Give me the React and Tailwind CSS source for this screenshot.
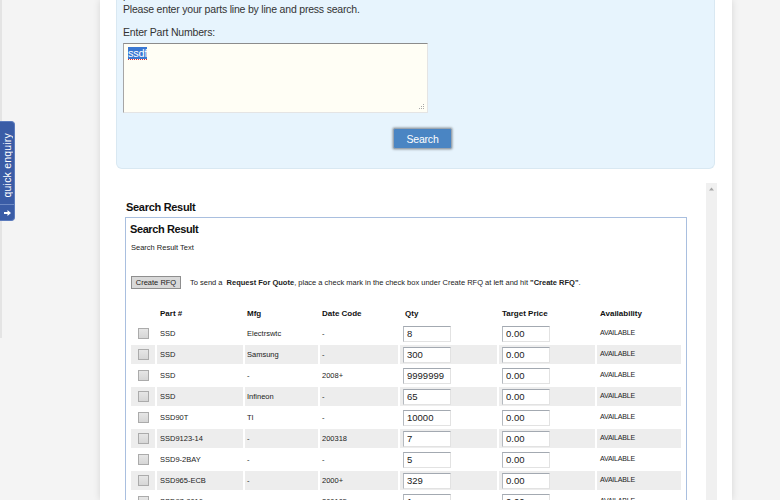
import React from "react";

const rows = [
  { part: "SSD", mfg: "Electrswtc", date: "-", qty: "8" },
  { part: "SSD", mfg: "Samsung", date: "-", qty: "300" },
  { part: "SSD", mfg: "-", date: "2008+", qty: "9999999" },
  { part: "SSD", mfg: "Infineon", date: "-", qty: "65" },
  { part: "SSD90T", mfg: "TI", date: "-", qty: "10000" },
  { part: "SSD9123-14", mfg: "-", date: "200318", qty: "7" },
  { part: "SSD9-2BAY", mfg: "-", date: "-", qty: "5" },
  { part: "SSD965-ECB", mfg: "-", date: "2000+", qty: "329" },
  { part: "SSD97-8016", mfg: "-", date: "200105", qty: "1" },
];

function Field({ value }) {
  return (
    <input
      readOnly
      value={value}
      className="block h-[16px] w-[48px] border border-t-[#a3a9b1] border-l-[#b5bac0] border-r-[#e2e2e2] border-b-[#e2e2e2] bg-white px-[3px] text-[9.5px] text-[#222] outline-none"
    />
  );
}

function QuickEnquiry() {
  return (
    <div className="absolute left-0 top-[121px] flex h-[100px] w-[15px] flex-col items-center rounded-r-[4px] border border-l-0 border-[#5b7bbd] bg-[#3a5ca6]">
      <div className="mt-[5px] flex h-[77px] items-center justify-center">
        <span className="rotate-180 text-[10.5px] leading-[13px] tracking-[0.2px] text-white [writing-mode:vertical-rl]">
          quick enquiry
        </span>
      </div>
      <div className="h-px w-full bg-[#6d89c4]" />
      <svg className="mt-[5px]" width="7" height="6" viewBox="0 0 7 6">
        <path d="M0 2 H3.5 V0 L7 3 L3.5 6 V4 H0 Z" fill="#fff" />
      </svg>
    </div>
  );
}

export default function App() {
  return (
    <div
      className="relative flex h-[500px] w-[780px] overflow-hidden bg-[#f4f4f4] text-[#222]"
      style={{ fontFamily: '"Liberation Sans", Arial, sans-serif' }}
    >
      <div className="absolute left-0 top-0 h-[338px] w-[2px] bg-[#e4e4e4]" />

      <div className="w-[100px] shrink-0" />

      <div className="flex w-[632px] shrink-0 flex-col bg-white shadow-[0_0_7px_rgba(0,0,0,0.13)]">
        {/* Search form */}
        <div className="-mt-[12px] ml-[16px] w-[599px] rounded-b-[6px] border border-t-0 border-[#d9e8f2] bg-[#e7f4fd] pb-[19px] pl-[6px] text-[10.5px] leading-[14px] tracking-[-0.2px] text-[#333]">
          <p>parts search</p>
          <p>Please enter your parts line by line and press search.</p>
          <p className="mt-[9px]">Enter Part Numbers:</p>
          <div className="relative mt-[4px] h-[70px] w-[305px] border border-t-[#8c8c8c] border-l-[#a6a6a6] border-r-[#e4e4e4] border-b-[#e4e4e4] bg-[#fffef5] px-[4px] pt-[3px] leading-[13px]">
            <span className="bg-[#3a78d2] text-[11px] text-white underline decoration-[#e03030] decoration-dotted decoration-1 underline-offset-2">
              ssdf
            </span>
            <svg className="absolute bottom-[2px] right-[2px]" width="7" height="7" viewBox="0 0 7 7">
              <rect x="5" y="1" width="1" height="1" fill="#a8a8a8" />
              <rect x="3" y="3" width="1" height="1" fill="#a8a8a8" />
              <rect x="5" y="3" width="1" height="1" fill="#a8a8a8" />
              <rect x="1" y="5" width="1" height="1" fill="#a8a8a8" />
              <rect x="3" y="5" width="1" height="1" fill="#a8a8a8" />
              <rect x="5" y="5" width="1" height="1" fill="#a8a8a8" />
            </svg>
          </div>
          <button className="ml-[270px] mt-[15px] flex h-[21px] w-[59px] items-center justify-center rounded-[2px] border border-[#9aa5b1] bg-[#4a85c3] text-[10.5px] text-white shadow-[0_0_2px_1px_rgba(0,0,0,0.25)]">
            Search
          </button>
        </div>

        {/* Result frame */}
        <div className="ml-[16px] mt-[14px] flex w-[601px] flex-1">
          <div className="flex-1 pl-[9px] pt-[17px]">
            <h2 className="ml-px text-[11px] font-bold leading-[14px] tracking-[-0.3px] text-[#111]">
              Search Result
            </h2>
            <div className="mt-[3px] w-[562px] border border-[#a9bfdf] px-[3px] pt-[4px]">
              <h3 className="ml-[1px] text-[11px] font-bold leading-[14px] tracking-[-0.4px] text-[#111]">
                Search Result
              </h3>
              <p className="ml-[2px] mt-[7px] text-[7.5px] leading-[10px]">Search Result Text</p>
              <div className="ml-[2px] mt-[23px] flex items-center">
                <button className="flex h-[13px] w-[50px] items-center justify-center border border-[#8e8e8e] bg-[#d9d9d9] text-[7.5px] text-[#222]">
                  Create RFQ
                </button>
                <p className="ml-[9px] text-[7.5px] leading-[10px]">
                  To send a <b className="ml-[2px]">Request For Quote</b>, place a check mark in the check box under
                  Create RFQ at left and hit <b>"Create RFQ"</b>.
                </p>
              </div>
              <table className="mt-[14px] w-[554px] table-fixed border-separate border-spacing-[2px] text-[7.5px]">
                <colgroup>
                  <col className="w-[24px]" />
                  <col className="w-[86px]" />
                  <col className="w-[73px]" />
                  <col className="w-[78px]" />
                  <col className="w-[97px]" />
                  <col className="w-[96px]" />
                  <col className="w-[84px]" />
                </colgroup>
                <thead>
                  <tr className="h-[17px] text-left text-[8px] font-bold text-[#111]">
                    <th />
                    <th className="pl-[3px]">Part #</th>
                    <th className="pl-[2px]">Mfg</th>
                    <th className="pl-[2px]">Date Code</th>
                    <th className="pl-[5px]">Qty</th>
                    <th className="pl-[3px]">Target Price</th>
                    <th className="pl-[3px]">Availability</th>
                  </tr>
                </thead>
                <tbody>
                  {rows.map((r, i) => (
                    <tr key={i} className={`h-[19px] ${i % 2 === 1 ? "bg-[#ededed]" : ""}`}>
                      <td>
                        <span className="mx-auto block h-[11px] w-[11px] border border-[#ababab] bg-gradient-to-b from-[#e6e6e6] to-[#d6d6d6]" />
                      </td>
                      <td className="pl-[3px]">{r.part}</td>
                      <td className="pl-[2px]">{r.mfg}</td>
                      <td className="pl-[2px]">{r.date}</td>
                      <td className="pl-[3px]">
                        <Field value={r.qty} />
                      </td>
                      <td className="pl-[3px]">
                        <Field value="0.00" />
                      </td>
                      <td className="pl-[3px] text-[7px] tracking-[-0.2px]">AVAILABLE</td>
                    </tr>
                  ))}
                </tbody>
              </table>
            </div>
          </div>
          <div className="flex w-[11px] shrink-0 justify-center bg-[#f0f0f0] pt-[4px]">
            <svg width="5" height="4" viewBox="0 0 5 4">
              <path d="M0 3.5 L2.5 0.5 L5 3.5 Z" fill="#a6a6a6" />
            </svg>
          </div>
        </div>
      </div>

      <QuickEnquiry />
    </div>
  );
}
